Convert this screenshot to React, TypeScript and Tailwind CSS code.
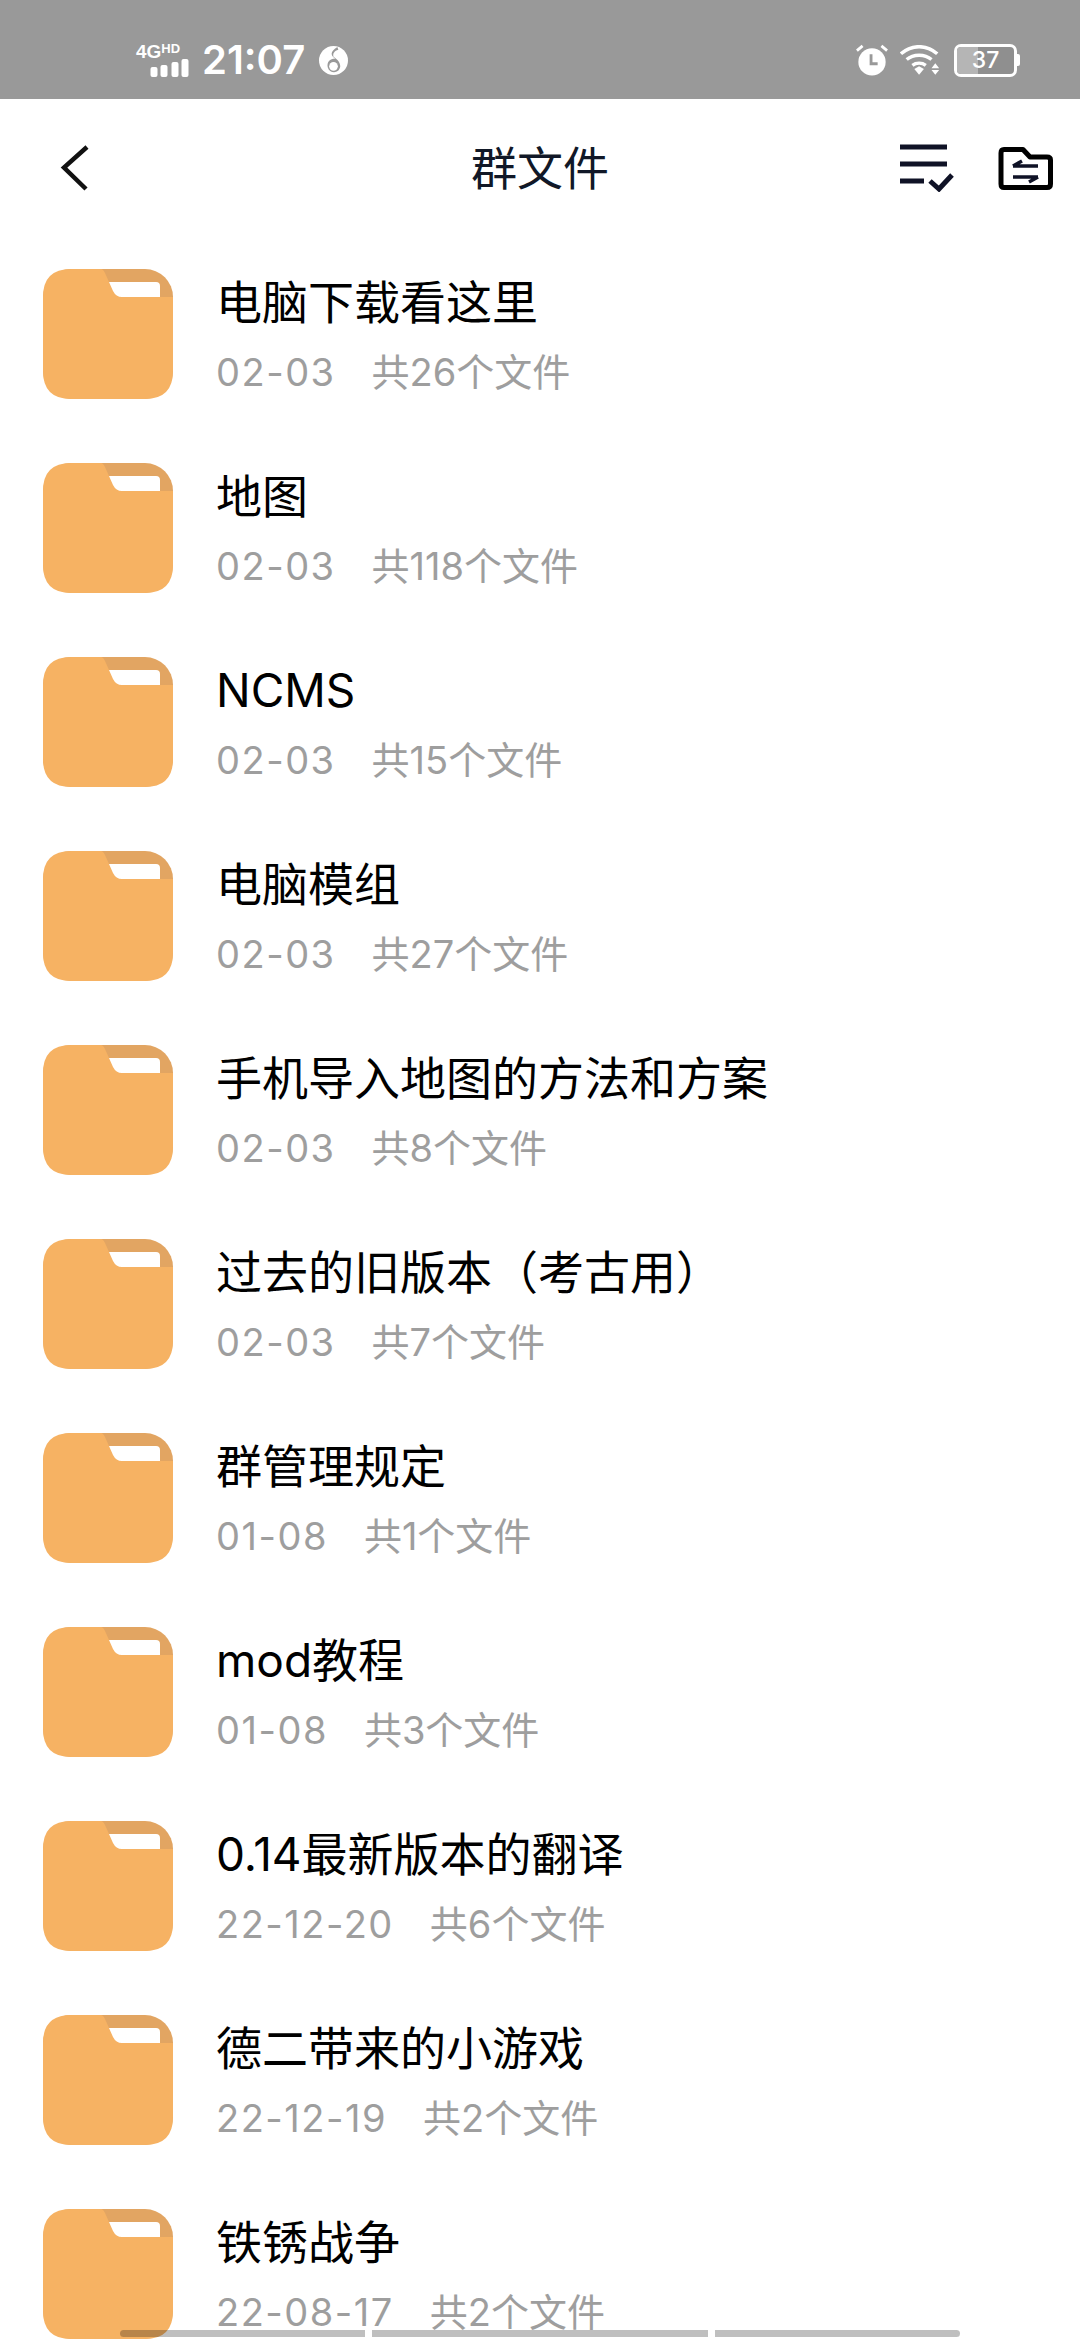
const folders = [
  { name: "电脑下载看这里", date: "02-03", count: "共26个文件" },
  { name: "地图", date: "02-03", count: "共118个文件" },
  { name: "NCMS", date: "02-03", count: "共15个文件" },
  { name: "电脑模组", date: "02-03", count: "共27个文件" },
  { name: "手机导入地图的方法和方案", date: "02-03", count: "共8个文件" },
  { name: "过去的旧版本（考古用）", date: "02-03", count: "共7个文件" },
  { name: "群管理规定", date: "01-08", count: "共1个文件" },
  { name: "mod教程", date: "01-08", count: "共3个文件" },
  { name: "0.14最新版本的翻译", date: "22-12-20", count: "共6个文件" },
  { name: "德二带来的小游戏", date: "22-12-19", count: "共2个文件" },
  { name: "铁锈战争", date: "22-08-17", count: "共2个文件" },
]

function FolderIcon() {
  return (
    <svg width="130" height="130" viewBox="0 0 130 130" className="shrink-0">
      <rect width="130" height="130" rx="28" fill="#e2a562" />
      <path d="M65 13 H113 Q117 13 117 17 V28 H74 Q71 28 70 25 Z" fill="#ffffff" />
      <path d="M28 0 H58 Q60 0 62 4 L70 22 Q73 28 79 28 H130 V102 Q130 130 102 130 H28 Q0 130 0 102 V28 Q0 0 28 0 Z" fill="#f6b263" />
    </svg>
  )
}

function StatusBar() {
  return (
    <div className="h-[99px] bg-[#999999] flex items-center justify-between pl-[136px] pr-[60px] pt-[21px] text-white">
      <div className="flex items-center">
        <div className="relative w-[53px] h-[34px]">
          <span className="absolute left-0 top-[-5px] text-[19px] leading-[22px] font-bold font-['Liberation_Sans',sans-serif]">
            4G<span className="text-[13px] align-[5px]">HD</span>
          </span>
          <svg width="39" height="18" viewBox="0 0 38 18" className="absolute left-[14px] top-[16px]">
            <rect x="0" y="8" width="7" height="10" rx="2" fill="#fff" />
            <rect x="10" y="6" width="7" height="12" rx="2" fill="#fff" />
            <rect x="21" y="3" width="7" height="15" rx="2" fill="#fff" />
            <rect x="31" y="0" width="7" height="18" rx="2" fill="#fff" />
          </svg>
        </div>
        <span className="ml-[13px] text-[40px] leading-none font-semibold font-['Inter',sans-serif]">21:07</span>
        <svg width="29" height="29" viewBox="0 0 30 30" className="ml-[14px]">
          <circle cx="15" cy="15" r="15" fill="#fff" />
          <path d="M19 1 C11 6 12 10 17 13 C11 13 8 17 9 22 C11 29 21 29 22 21 C22 16 18 13 15 11 C14 8 16 5 20 4 Z" fill="#999" />
          <circle cx="15" cy="21" r="4.5" fill="#fff" />
        </svg>
      </div>
      <div className="flex items-center">
        <svg width="32" height="32" viewBox="0 0 34 34">
          <circle cx="17" cy="19" r="14.5" fill="#fff" />
          <path d="M1 7 L7 2 M33 7 L27 2" stroke="#fff" strokeWidth="3" />
          <path d="M16 11 V21 H23" stroke="#999" strokeWidth="3" fill="none" />
        </svg>
        <svg width="42" height="31" viewBox="0 0 44 32" className="ml-[12px]">
          <path d="M1 9 C12 -1 28 -1 39 9 M7 15 C14 9 26 9 33 15 M13 21 C17 18 23 18 27 21" stroke="#fff" strokeWidth="3.6" fill="none" />
          <path d="M15 25 L20 22 L25 25 L20 31 Z" fill="#fff" />
          <path d="M37 19 L41 24 H33 Z M33 26 H41 L37 31 Z" fill="#fff" />
        </svg>
        <div className="ml-[12px] relative w-[63px] h-[33px] rounded-[7px] border-[3px] border-white overflow-hidden flex items-center justify-center bg-[#8f8f8f]">
          <div className="absolute left-0 top-0 bottom-0 w-[21px] bg-[#b5b5b5]" />
          <span className="relative text-[23px] font-medium leading-none font-['Inter',sans-serif]">37</span>
        </div>
        <div className="w-[3px] h-[12px] bg-white rounded-r-[2px]" />
      </div>
    </div>
  )
}

function NavBar() {
  return (
    <div className="h-[138px] flex items-center justify-between pr-[27px] pl-[60px] relative">
      <svg width="30" height="46" viewBox="0 0 30 46" fill="none">
        <path d="M27 2 L4 22.5 L26 44" stroke="#111111" strokeWidth="4.5" />
      </svg>
      <span className="absolute left-0 right-0 text-center text-[46px] leading-none text-[#111827]">群文件</span>
      <div className="flex items-center">
        <svg width="54" height="48" viewBox="0 0 54 48" fill="none">
          <path d="M0 3 H47 M0 20 H47 M0 37 H24" stroke="#0f1226" strokeWidth="5" />
          <path d="M30 37 L39 45 L52 31" stroke="#0f1226" strokeWidth="5" />
        </svg>
        <svg width="55" height="43" viewBox="0 0 55 43" fill="none" className="ml-[44px]">
          <path d="M3 6 Q3 2.5 6 2.5 H25 L32 10 H49 Q52.5 10 52.5 13 V37 Q52.5 40.5 49 40.5 H6 Q3 40.5 3 37 Z" stroke="#000" strokeWidth="5" strokeLinejoin="round" />
          <path d="M15 19 H40 M24 14 L15 19 M15 30 H40 M31 35 L40 30" stroke="#0f1226" strokeWidth="3.5" />
        </svg>
      </div>
    </div>
  )
}

function FolderRow({ name, date, count }: { name: string; date: string; count: string }) {
  return (
    <div className="h-[194px] flex items-center pl-[43px]">
      <FolderIcon />
      <div className="ml-[43px] min-w-0">
        <div className="text-[46px] leading-[60px] text-black whitespace-nowrap">{name}</div>
        <div className="mt-[15px] flex text-[38px] leading-[50px] text-[#9e9e9e] whitespace-nowrap">
          <span className="tracking-[1.5px]">{date}</span>
          <span className="ml-[36px]">{count}</span>
        </div>
      </div>
    </div>
  )
}

export default function App() {
  return (
    <div className="relative w-[1080px] h-[2340px] overflow-hidden bg-white font-['Inter','Noto_Sans_CJK_SC',sans-serif]">
      <StatusBar />
      <NavBar />
      <div>
        {folders.map((f) => (
          <FolderRow key={f.name} {...f} />
        ))}
      </div>
      <div className="absolute left-[120px] bottom-[3px] w-[840px] h-[7px] flex gap-[7px]">
        <div className="w-[245px] bg-black/25 rounded-l-full" />
        <div className="w-[336px] bg-black/25" />
        <div className="flex-1 bg-black/25 rounded-r-full" />
      </div>
    </div>
  )
}
